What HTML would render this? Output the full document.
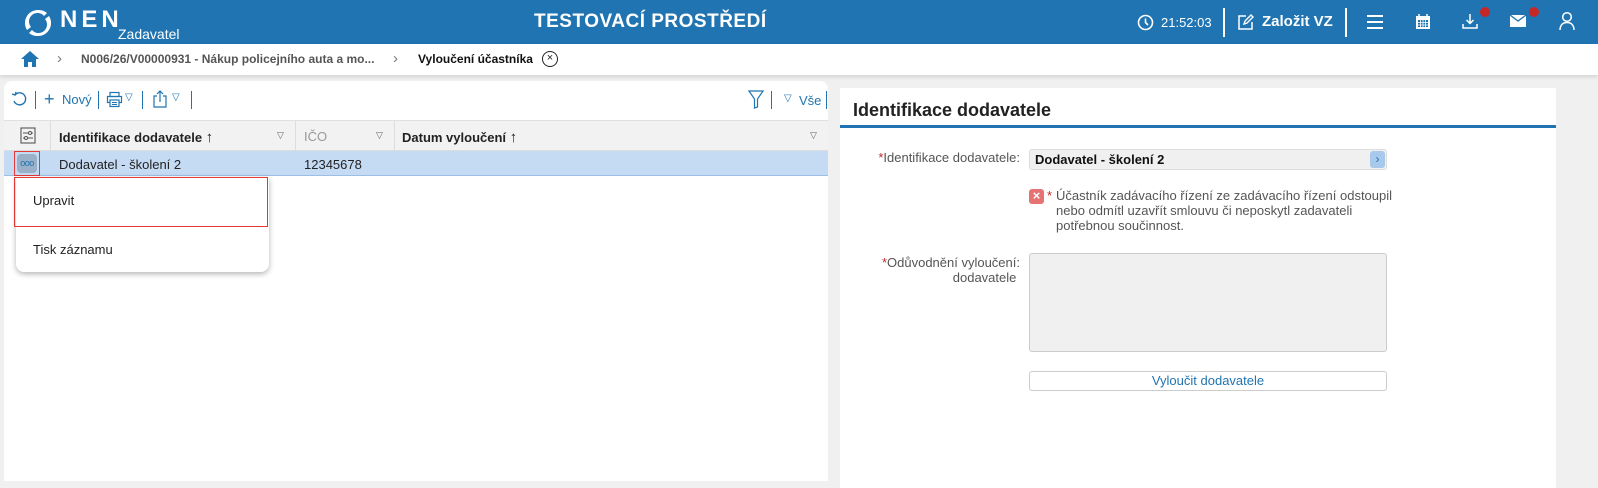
<!DOCTYPE html>
<html><head><meta charset="utf-8"><style>
*{box-sizing:border-box;margin:0;padding:0}
body{width:1598px;height:468px;overflow:hidden;background:#f0f0f0;font-family:"Liberation Sans",sans-serif;font-size:13px;color:#222;position:relative}
.abs{position:absolute;white-space:nowrap}
.hdr{left:0;top:0;width:1598px;height:44px;background:#1f74b1;color:#fff}
.bc{left:0;top:44px;width:1598px;height:31px;background:#fff;box-shadow:0 2px 4px rgba(0,0,0,.12)}
.lp{left:4px;top:81px;width:824px;height:400px;background:#fff;border-radius:8px 8px 0 0}
.rp{left:840px;top:88px;width:716px;height:400px;background:#fff}
.sep{width:1px;background:#1f74b1;height:18px}
.blue{color:#1f74b1}
</style></head><body>
<div class="abs hdr">
 <svg class="abs" style="left:22px;top:7px" width="32" height="32" viewBox="0 0 32 32"><path d="M16 3A13 13 0 0 0 5 23L9 20A8.5 8.5 0 0 1 22 9L25 6A13 13 0 0 0 16 3Z" fill="#fff"/><path d="M16 29A13 13 0 0 0 27 9L23 12A8.5 8.5 0 0 1 10 23L7 26A13 13 0 0 0 16 29Z" fill="#fff"/></svg>
 <div class="abs" style="left:60px;top:6px;font-size:24px;font-weight:bold;letter-spacing:4px">NEN</div>
 <div class="abs" style="left:118px;top:26px;font-size:14px">Zadavatel</div>
 <div class="abs" style="left:534px;top:11px;font-size:19px;font-weight:bold;letter-spacing:.5px">TESTOVACÍ PROSTŘEDÍ</div>
 <svg class="abs" style="left:1137px;top:14px" width="17" height="17" viewBox="0 0 17 17"><circle cx="8.5" cy="8.5" r="7" fill="none" stroke="#fff" stroke-width="1.6"/><path d="M8.5 4.5V8.5L11 11" fill="none" stroke="#fff" stroke-width="1.6"/></svg>
 <div class="abs" style="left:1161px;top:15px;font-size:13px">21:52:03</div>
 <div class="abs" style="left:1223px;top:8px;width:2px;height:29px;background:#fff"></div>
 <svg class="abs" style="left:1237px;top:13px" width="18" height="18" viewBox="0 0 18 18"><path d="M9 3H2V16H15V9" fill="none" stroke="#fff" stroke-width="1.5"/><path d="M7 11L8 8L14 2L16 4L10 10Z" fill="none" stroke="#fff" stroke-width="1.4"/></svg>
 <div class="abs" style="left:1262px;top:13px;font-size:15px;font-weight:bold">Založit VZ</div>
 <div class="abs" style="left:1345px;top:8px;width:2px;height:29px;background:#fff"></div>
 <div class="abs" style="left:1367px;top:15px;width:16px;height:2px;background:#fff;box-shadow:0 6px 0 #fff,0 12px 0 #fff"></div>
 <svg class="abs" style="left:1414px;top:13px" width="18" height="18" viewBox="0 0 18 18"><rect x="2" y="3" width="14" height="13" fill="#fff"/><rect x="4" y="7" width="10" height="7" fill="#1f74b1"/><path d="M4 9.5H14M4 12H14M6.5 7V14M9 7V14M11.5 7V14" stroke="#fff" stroke-width=".8"/><path d="M5 1V4M13 1V4" stroke="#fff" stroke-width="1.5"/></svg>
 <svg class="abs" style="left:1461px;top:12px" width="18" height="18" viewBox="0 0 18 18"><path d="M9 2V11M5.5 8L9 11.5L12.5 8" fill="none" stroke="#fff" stroke-width="1.5"/><path d="M2 12V16H16V12" fill="none" stroke="#fff" stroke-width="1.5"/></svg>
 <div class="abs" style="left:1480px;top:7px;width:10px;height:10px;border-radius:50%;background:#c62828"></div>
 <svg class="abs" style="left:1509px;top:14px" width="18" height="14" viewBox="0 0 18 14"><rect x="1" y="1" width="16" height="12" fill="#fff"/><path d="M1 1L9 7L17 1" fill="none" stroke="#1f74b1" stroke-width="1.3"/></svg>
 <div class="abs" style="left:1529px;top:7px;width:10px;height:10px;border-radius:50%;background:#c62828"></div>
 <svg class="abs" style="left:1558px;top:11px" width="18" height="20" viewBox="0 0 18 20"><circle cx="9" cy="6" r="4.3" fill="none" stroke="#fff" stroke-width="1.5"/><path d="M2 19C2 14 5 11.5 9 11.5S16 14 16 19" fill="none" stroke="#fff" stroke-width="1.5"/></svg>
</div>
<div class="abs bc">
 <svg class="abs" style="left:20px;top:6px" width="20" height="18" viewBox="0 0 20 18"><path d="M10 1L1 9H4V17H8V12H12V17H16V9H19Z" fill="#1f74b1"/></svg>
 <div class="abs" style="left:57px;top:6px;font-size:15px;color:#777">›</div>
 <div class="abs" style="left:81px;top:8px;font-size:12px;color:#555;font-weight:bold">N006/26/V00000931 - Nákup policejního auta a mo...</div>
 <div class="abs" style="left:393px;top:6px;font-size:15px;color:#777">›</div>
 <div class="abs" style="left:418px;top:8px;font-size:12px;font-weight:bold;color:#111">Vyloučení účastníka</div>
 <div class="abs" style="left:542px;top:7px;width:16px;height:16px;border:1.5px solid #222;border-radius:50%;font-size:11px;line-height:13px;text-align:center">×</div>
</div>
<div class="abs lp">
 <svg class="abs" style="left:7px;top:10px" width="17" height="17" viewBox="0 0 17 17"><path d="M4 4A6 6 0 1 1 3 10" fill="none" stroke="#1f74b1" stroke-width="1.4"/><path d="M1 3L4 4L5 1" fill="none" stroke="#1f74b1" stroke-width="1.3"/></svg>
 <div class="abs sep" style="left:31px;top:10px"></div>
 <div class="abs blue" style="left:40px;top:8px;font-size:18px">+</div>
 <div class="abs blue" style="left:58px;top:11px">Nový</div>
 <div class="abs sep" style="left:94px;top:10px"></div>
 <svg class="abs" style="left:102px;top:10px" width="17" height="17" viewBox="0 0 17 17"><rect x="4" y="1.5" width="9" height="4" fill="none" stroke="#1f74b1" stroke-width="1.2"/><rect x="1.5" y="5.5" width="14" height="6" fill="none" stroke="#1f74b1" stroke-width="1.2"/><rect x="4" y="9" width="9" height="6.5" fill="#fff" stroke="#1f74b1" stroke-width="1.2"/><path d="M6 11.5H11M6 13.5H11" stroke="#1f74b1"/></svg>
 <div class="abs blue" style="left:121px;top:11px;font-size:10px">▽</div>
 <div class="abs sep" style="left:138px;top:10px"></div>
 <svg class="abs" style="left:148px;top:9px" width="16" height="18" viewBox="0 0 16 18"><path d="M5 6H2V17H14V6H11" fill="none" stroke="#1f74b1" stroke-width="1.2"/><path d="M8 12V1M5 4L8 1L11 4" fill="none" stroke="#1f74b1" stroke-width="1.2"/></svg>
 <div class="abs blue" style="left:168px;top:11px;font-size:10px">▽</div>
 <div class="abs sep" style="left:187px;top:10px"></div>
 <svg class="abs" style="left:744px;top:9px" width="16" height="19" viewBox="0 0 16 19"><path d="M1 1H15L9.5 9V17L6.5 18V9Z" fill="none" stroke="#1f74b1" stroke-width="1.2"/></svg>
 <div class="abs sep" style="left:767px;top:10px"></div>
 <div class="abs blue" style="left:780px;top:12px;font-size:10px">▽</div>
 <div class="abs blue" style="left:795px;top:12px">Vše</div>
 <div class="abs sep" style="left:822px;top:10px"></div>
 <div class="abs" style="left:0;top:39px;width:824px;height:31px;background:#f2f2f2;border-top:1px solid #e0e0e0;border-bottom:1px solid #ddd"></div>
 <div class="abs" style="left:46px;top:40px;width:1px;height:30px;background:#ddd"></div>
 <div class="abs" style="left:291px;top:40px;width:1px;height:30px;background:#ddd"></div>
 <div class="abs" style="left:390px;top:40px;width:1px;height:30px;background:#ddd"></div>
 <svg class="abs" style="left:16px;top:46px" width="16" height="17" viewBox="0 0 16 17"><rect x="1" y="1" width="14" height="15" fill="none" stroke="#555" stroke-width="1.1"/><path d="M3 6H13M3 11H13" stroke="#555"/><circle cx="10" cy="6" r="1.5" fill="#fff" stroke="#555"/><circle cx="6" cy="11" r="1.5" fill="#fff" stroke="#555"/></svg>
 <div class="abs" style="left:55px;top:48px;font-weight:bold">Identifikace dodavatele <span style="font-weight:normal;font-size:15px">↑</span></div>
 <div class="abs" style="left:273px;top:49px;font-size:9px;color:#666">▽</div>
 <div class="abs" style="left:300px;top:48px;color:#999">IČO</div>
 <div class="abs" style="left:372px;top:49px;font-size:9px;color:#666">▽</div>
 <div class="abs" style="left:398px;top:48px;font-weight:bold">Datum vyloučení <span style="font-weight:normal;font-size:15px">↑</span></div>
 <div class="abs" style="left:806px;top:49px;font-size:9px;color:#666">▽</div>
 <div class="abs" style="left:0;top:70px;width:824px;height:25px;background:#c5daf3;border-bottom:1px solid #9dbfe6"></div>
 <div class="abs" style="left:10px;top:70px;width:26px;height:25px;border:1px solid #e53935;padding:2px"><div style="width:20px;height:19px;background:#9ab0c8;border-radius:4px;color:#1f74b1;font-size:9px;text-align:center;line-height:18px;letter-spacing:-.5px">ooo</div></div>
 <div class="abs" style="left:55px;top:76px">Dodavatel - školení 2</div>
 <div class="abs" style="left:300px;top:76px">12345678</div>
 <div class="abs" style="left:12px;top:96px;width:253px;height:95px;background:#fff;border-radius:0 0 8px 8px;box-shadow:0 2px 6px rgba(0,0,0,.3)">
  <div class="abs" style="left:-2px;top:0;width:254px;height:50px;border:1px solid #e53935"></div>
  <div class="abs" style="left:17px;top:16px">Upravit</div>
  <div class="abs" style="left:17px;top:65px">Tisk záznamu</div>
 </div>
</div>
<div class="abs rp">
 <div class="abs" style="left:13px;top:12px;font-size:18px;font-weight:bold;color:#222">Identifikace dodavatele</div>
 <div class="abs" style="left:0;top:37px;width:716px;height:3px;background:#1f74b1"></div>
 <div class="abs" style="left:0px;top:62px;width:180px;text-align:right;color:#555"><span style="color:#c62828">*</span>Identifikace dodavatele:</div>
 <div class="abs" style="left:189px;top:61px;width:358px;height:21px;background:#f0f0f0;border:1px solid #ddd;border-radius:3px"></div>
 <div class="abs" style="left:195px;top:64px;font-weight:bold;color:#111">Dodavatel - školení 2</div>
 <div class="abs" style="left:530px;top:63px;width:15px;height:17px;background:#a9c9ec;border-radius:3px;color:#1f74b1;text-align:center;font-size:12px;line-height:16px">›</div>
 <div class="abs" style="left:189px;top:101px;width:15px;height:15px;background:#e57373;border-radius:3px;color:#fff;font-size:13px;line-height:14px;text-align:center;font-weight:bold">×</div>
 <div class="abs" style="left:207px;top:100px;color:#c62828">*</div>
 <div class="abs" style="left:216px;top:100px;color:#555;line-height:15px">Účastník zadávacího řízení ze zadávacího řízení odstoupil<br>nebo odmítl uzavřít smlouvu či neposkytl zadavateli<br>potřebnou součinnost.</div>
 <div class="abs" style="left:0px;top:167px;width:180px;text-align:right;color:#555;line-height:15px"><span style="color:#c62828">*</span>Odůvodnění vyloučení:<br>dodavatele&nbsp;</div>
 <div class="abs" style="left:189px;top:165px;width:358px;height:99px;background:#f0f0f0;border:1px solid #ccc;border-radius:3px"></div>
 <div class="abs" style="left:189px;top:283px;width:358px;height:20px;background:#fff;border:1px solid #ccc;border-radius:3px;text-align:center;line-height:18px;color:#1f74b1">Vyloučit dodavatele</div>
</div>
</body></html>
